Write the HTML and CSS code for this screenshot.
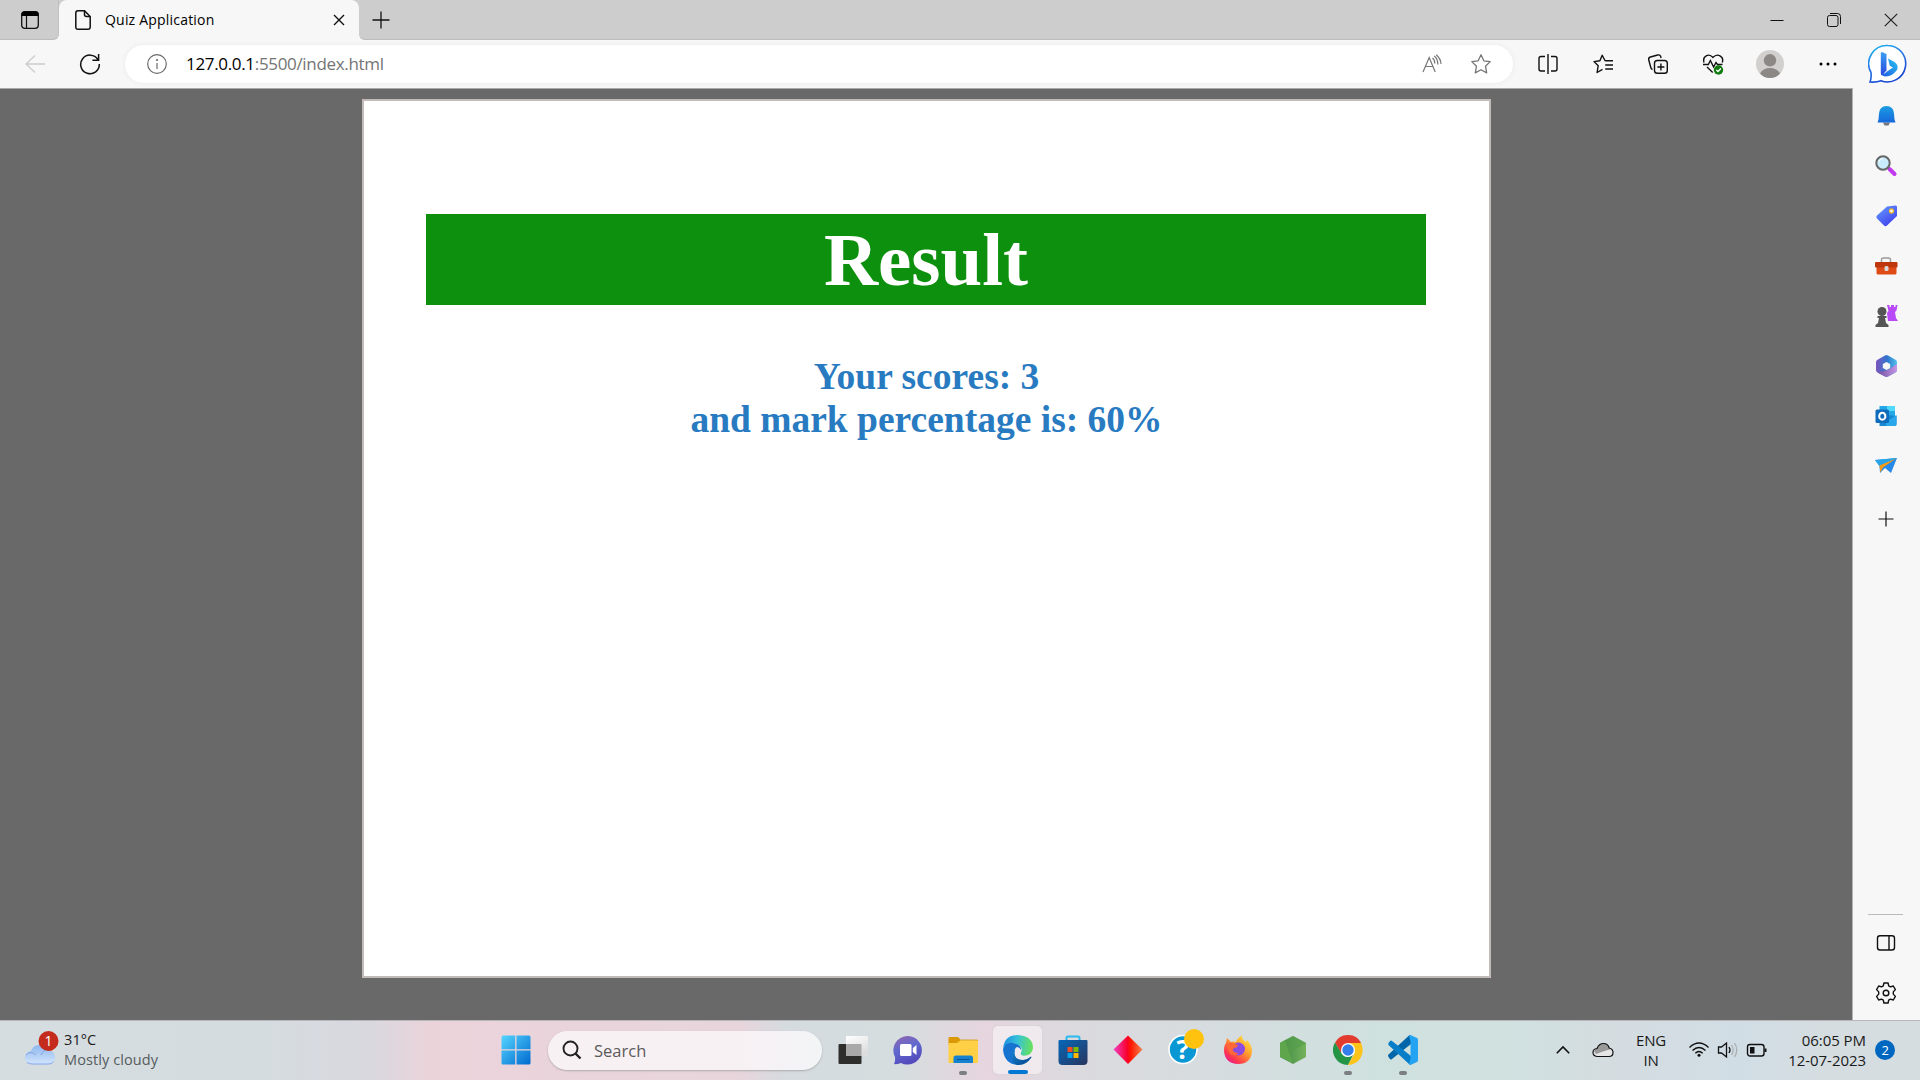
FILE: index.html
```html
<!DOCTYPE html>
<html lang="en">
<head>
<meta charset="utf-8">
<title>Quiz Application</title>
<link rel="stylesheet" href="styles.css">
</head>
<body>
<div class="desktop">
  <header class="tabstrip">
    <div class="strip-left">
      <svg width="20" height="20" viewBox="0 0 20 20"><rect x="1.7" y="1.7" width="16.6" height="16.6" rx="3" fill="none" stroke="#111" stroke-width="1.3"/><path d="M1.5 6V4Q1.5 1.5 4 1.5H16Q18.500 1.500 18.500 4V6Z"/><path d="M6.500 6V18" stroke="#111" stroke-width="1.200"/></svg>
    </div>
    <div class="tab">
      <svg width="18" height="22" viewBox="0 0 18 22" fill="none" stroke="#111" stroke-width="1.5"><path d="M4 1.700H10.500L16.200 7.500V18Q16.200 20.300 14 20.300H4Q1.800 20.300 1.800 18V4Q1.800 1.700 4 1.700Z"/><path d="M10.500 2V5.500Q10.500 7.500 12.500 7.500H16"/></svg>
      <span class="tab-title">Quiz Application</span>
      <svg width="12" height="12" viewBox="0 0 12 12" stroke="#111" stroke-width="1.4"><path d="M1 1L11 11M11 1L1 11"/></svg>
    </div>
    <div class="strip-right">
      <svg width="18" height="18" viewBox="0 0 18 18" stroke="#111" stroke-width="1.300"><path d="M9 .5V17.500M.5 9H17.500"/></svg>
      <div class="window-buttons">
        <span><svg width="14" height="14" viewBox="0 0 14 14" stroke="#111"><path d="M.5 7.500H13.500"/></svg></span>
        <span><svg width="14" height="14" viewBox="0 0 14 14" fill="none" stroke="#111"><rect x=".5" y="2.500" width="10.500" height="11" rx="2"/><path d="M3 .5H10.500Q13.500 .5 13.500 3.500V11"/></svg></span>
        <span><svg width="14" height="14" viewBox="0 0 14 14" stroke="#222" stroke-width="1.200"><path d="M.8 .8L13.200 13.200M13.200 .8L.8 13.200"/></svg></span>
      </div>
    </div>
  </header>

  <nav class="toolbar">
    <span class="cell back"><svg width="20" height="18" viewBox="0 0 20 18" fill="none" stroke="#ccc" stroke-width="1.300"><path d="M20 9H1M10 .5L1 9L10 17.500"/></svg></span>
    <span class="cell"><svg width="22" height="22" viewBox="0 0 22 22" fill="none" stroke="#111" stroke-width="1.500"><path d="M18.900 6.500A9.300 9.300 0 1 0 20.300 11M19.600 1V7.200H13.400"/></svg></span>
    <div class="address">
      <svg width="22" height="22" viewBox="0 0 22 22" fill="none" stroke="#6b6b6b" stroke-width="1.200"><circle cx="11" cy="11" r="9.300"/><path d="M11 10V16"/><circle cx="11" cy="7" r=".5"/></svg>
      <span class="url"><b>127.0.0.1</b>:5500/index.html</span>
      <svg class="read" width="20" height="20" viewBox="0 0 20 20" fill="none" stroke="#767676" stroke-width="1.200"><path d="M1 18L7.200 3.500L13.200 18M3.400 12.500H11"/><path d="M10.500 4Q12.800 5.600 12.800 9.500M12.300 2Q16 5 15.800 10.500M14.200 .7Q18.800 4.500 19 10"/></svg>
      <svg width="22" height="22" viewBox="0 0 22 22" fill="none" stroke="#767676" stroke-width="1.300" stroke-linejoin="round"><path d="M11 1.800L13.800 7.800L20.200 8.600L15.500 13.200L16.700 19.900L11 16.700L5.300 19.900L6.500 13.200L1.800 8.600L8.200 7.800Z"/></svg>
    </div>
    <div class="tools">
      <span class="cell"><svg width="20" height="20" viewBox="0 0 20 20" fill="none" stroke="#111" stroke-width="1.400"><path d="M7 2.500H3Q1 2.500 1 4.500V15Q1 17 3 17H7M13 2.500H17Q19 2.500 19 4.500V15Q19 17 17 17H13M10 0V20"/></svg></span>
      <span class="cell"><svg width="20" height="20" viewBox="0 0 20 20" fill="none" stroke="#111" stroke-width="1.400" stroke-linejoin="round"><path d="M12.200 7L9.200 1.200L6.900 6.800L1 7.600L5.200 11.700L4.100 18.500L9.500 15.400M12.200 6.800H20M12.200 11H20M12.200 15H20"/></svg></span>
      <span class="cell"><svg width="22" height="22" viewBox="0 0 22 22" fill="none" stroke="#111" stroke-width="1.400"><rect x="7.500" y="7.500" width="12.800" height="12.800" rx="2.800"/><path d="M13.900 10.500V17.500M10.400 14H17.400M5.500 16.500Q4.100 16 3.800 14.500L1.700 6.800Q1.300 4.600 3.400 4L10.700 2Q13 1.400 13.600 3.300L14.100 5"/></svg></span>
      <span class="cell"><svg width="22" height="22" viewBox="0 0 22 22" fill="none" stroke="#111" stroke-width="1.400"><path d="M2 9.500C.2 3 6.700-.2 11 4.400C15.200-.2 22.300 3 20.300 9.500M1 11.500H6.300L8.400 7.500L11.600 14L14 9.500L15.500 11.500H20.500M5 14L10.700 19.500"/><circle cx="16.500" cy="17" r="4.700" fill="#107c10" stroke="none"/><path d="M14.300 17L16 18.600L18.900 15.500" stroke="#fff"/></svg></span>
      <span class="cell avatar"><svg width="28" height="28" viewBox="0 0 28 28"><circle cx="14" cy="14" r="14" fill="#d2d0ce"/><circle cx="14" cy="10.300" r="6.200" fill="#8b8886"/><path d="M4 23.500Q7 18 14 18Q21 18 24 23.500Q20 28 14 28Q8 28 4 23.500Z" fill="#8b8886"/></svg></span>
      <span class="cell"><svg width="18" height="4" viewBox="0 0 18 4"><circle cx="2" cy="2" r="1.500"/><circle cx="9" cy="2" r="1.500"/><circle cx="16" cy="2" r="1.500"/></svg></span>
      <span class="cell bing"><svg width="40" height="40" viewBox="0 0 40 40"><defs><linearGradient id="b1" x2=".5" y2="1"><stop stop-color="#18bff0"/><stop offset=".5" stop-color="#2878e8"/><stop offset="1" stop-color="#1746d1"/></linearGradient><linearGradient id="b2" x2="0" y2="1"><stop stop-color="#3aa0f2"/><stop offset="1" stop-color="#2948e0"/></linearGradient><linearGradient id="b3" x1="1" x2="0" y2="1"><stop stop-color="#28c5ef"/><stop offset="1" stop-color="#2157e4"/></linearGradient></defs><path d="M20 1.500A18.200 18.200 0 1 1 13 36.700Q8.500 38.500 2 38Q3.600 34 3 28.500A18.200 18.200 0 0 1 20 1.500Z" fill="#fff" stroke="url(#b1)" stroke-width="1.600"/><path d="M14 8L18.500 10V26.500L14 31.500Q12.800 31 12.800 29V8.500Z" fill="url(#b2)"/><path d="M20 14.500L26.500 18Q31 21 29 26Q24 32.500 18 32.500Q14 32.500 13 29.500Q16 31 19 27.500L25 23.500L21.800 21.800Z" fill="url(#b3)"/></svg></span>
    </div>
  </nav>

  <div class="browser">
    <main class="viewport">
      <section class="card">
        <h1>Result</h1>
        <p>Your scores: 3<br>and mark percentage is: 60%</p>
      </section>
    </main>
    <aside class="sidebar">
      <svg viewBox="0 0 24 24"><defs><linearGradient id="bell" x2="0" y2="1"><stop stop-color="#1b9de2"/><stop offset="1" stop-color="#1668dc"/></linearGradient></defs><path d="M9 18.500H16L14.500 21.500H10.500Z" fill="#73777b"/><path d="M12.500 2Q5.500 2 5 9.500L4.500 15.500L3.500 18.500H21.500L20.500 15.500L20 9.500Q19.500 2 12.500 2Z" fill="url(#bell)"/></svg>
      <svg viewBox="0 0 24 24"><path d="M15.500 15L20.500 20" stroke="#c239ef" stroke-width="4" stroke-linecap="round"/><circle cx="9" cy="9" r="6.700" fill="#c8ecfb" stroke="#666" stroke-width="2"/><path d="M4.500 8Q6 4.500 9 4.500" stroke="#fff" fill="none"/></svg>
      <svg viewBox="0 0 24 24"><defs><linearGradient id="tag" x2=".7" y2="1"><stop stop-color="#65a0ff"/><stop offset="1" stop-color="#403fed"/></linearGradient></defs><path d="M13 2.500L21.500 1.500Q23 1.500 23 3V12L13 21.500Q11.500 23 10 21.500L3 14.500Q1.500 13 3 11.500Z" fill="url(#tag)"/><circle cx="17.500" cy="7" r="2" fill="#fff" stroke="#edb92f" stroke-width="1.300"/></svg>
      <svg viewBox="0 0 24 24"><path d="M7.500 8V6Q7.500 4 9.500 4H14.500Q16.500 4 16.500 6V8" fill="none" stroke="#999" stroke-width="1.400"/><rect x="2.500" y="11" width="20" height="9.500" rx="1.500" fill="#df4b16"/><rect x="1" y="8" width="22.500" height="5.500" rx="1" fill="#bd360c"/><rect x="10.500" y="12" width="4" height="5" rx="1.500" fill="#d9d9d9"/></svg>
      <svg viewBox="0 0 24 24"><path d="M13 1H15.500V3H17V1H20V3H21.500V1H23.500L22.500 6.500L21 8L22 14L24 17H14L13 9L14.500 7Z" fill="#b94af7"/><g fill="#555"><circle cx="8" cy="7.500" r="4.500"/><path d="M3.500 12H12.500V14H11L12 19L14.500 21V23H1.500V21L4 19L5 14H3.500Z"/></g></svg>
      <svg viewBox="0 0 24 24"><defs><linearGradient id="m1"><stop stop-color="#7d54bc"/><stop offset=".55" stop-color="#2f78cf"/><stop offset="1" stop-color="#52c3ec"/></linearGradient><linearGradient id="m2"><stop stop-color="#74509e"/><stop offset="1" stop-color="#c496e8"/></linearGradient></defs><path d="M11 1.400Q12.500.700 14 1.600L21.500 5.700Q23 6.600 23 8.200V16Q23 17.600 21.500 18.500L14 22.500Q12.500 23.300 11 22.500L3.500 18.500Q2 17.600 2 16V8Q2 6.500 3.500 5.700Z" fill="url(#m1)"/><path d="M23 10V16Q23 17.600 21.500 18.500L14 22.500Q12.500 23.300 11 22.500L3.500 18.500L9 17.500L15.500 15Q18.500 13 23 10Z" fill="url(#m2)"/><path d="M12.500 8L16.200 10V14L12.500 16L8.800 14V10Z" fill="#f7f7f7"/></svg>
      <svg viewBox="0 0 24 24"><path d="M5.500 2H21V12H5.500Z" fill="#24a8e8"/><path d="M13 2H21V7H13Z" fill="#50d9ff"/><path d="M5.500 10L22.500 12V20Q22.500 22 21 22H5.500Z" fill="#1687d0"/><path d="M22.500 11L12 18V22H21Q22.500 22 22.500 20Z" fill="#28a8ea"/><rect x="1.500" y="5.500" width="13.500" height="13.500" rx="1.500" fill="#0f6cbd"/><ellipse cx="8.300" cy="12.200" rx="3.100" ry="3.500" fill="none" stroke="#fff" stroke-width="2"/></svg>
      <svg viewBox="0 0 24 24"><path d="M1 6L23 4L17 19L11 14L6 19L5.500 12Z" fill="#2789e8"/><path d="M1 6L23 4L5.500 12Z" fill="#28a5e8"/><path d="M5.500 11.500L22 4.500L9 13.500L6.500 18.500Z" fill="#f39b17"/></svg>
      <svg class="add" viewBox="0 0 24 24" stroke="#111" stroke-width="1.200"><path d="M12 4.500V19.500M4.500 12H19.500"/></svg>
      <div class="sidebar-foot">
        <svg viewBox="0 0 24 24" fill="none" stroke="#111" stroke-width="1.400"><rect x="3.500" y="4.700" width="17" height="14.300" rx="2.500"/><path d="M15 5V19"/></svg>
        <svg viewBox="0 0 24 24" fill="none" stroke="#111" stroke-width="1.400" stroke-linejoin="round"><circle cx="12" cy="12" r="2.800"/><path d="M9.900 2H14.100L14.700 4.800L16.500 5.900L19.300 5L21.400 8.600L19.300 10.900V13.100L21.400 15.400L19.300 19L16.500 18.100L14.700 19.200L14.100 22H9.900L9.300 19.200L7.500 18.100L4.700 19L2.600 15.400L4.700 13.100V10.900L2.600 8.600L4.700 5L7.500 5.900L9.300 4.800Z"/></svg>
      </div>
    </aside>
  </div>

  <footer class="taskbar">
    <div class="weather">
      <svg width="36" height="40" viewBox="0 0 36 40"><defs><linearGradient id="cl" x2="0" y2="1"><stop stop-color="#8eb7ee"/><stop offset="1" stop-color="#d2e4fd"/></linearGradient></defs><circle cx="23" cy="16" r="7" fill="#fa7815"/><path d="M8 33Q2 32.500 2 26.500Q2 21 8 20Q10 14 16 14Q21 14 23 19Q31 18 32 26Q32 33 26 33Z" fill="url(#cl)"/><path d="M3 24Q8 19 13 24M18 24Q20 19 25 19" fill="none" stroke="#82a5e4"/><path d="M4 31.500Q6 33 10 33H26Q29 33 30.500 30.500" fill="none" stroke="#86a6ec"/><circle cx="25.500" cy="10" r="10" fill="#c42b1c"/><text x="25.500" y="15" class="badge-text">1</text></svg>
      <div class="weather-text"><span class="dark">31°C</span><br>Mostly cloudy</div>
    </div>
    <div class="apps">
      <span class="app"><svg viewBox="0 0 30 30"><defs><linearGradient id="w" x2="1" y2="1"><stop stop-color="#55d5ff"/><stop offset="1" stop-color="#0069cf"/></linearGradient></defs><path d="M.5 2Q.5.5 2 .5H14.200V14.200H.5ZM15.500.5H28Q29.500.5 29.500 2V14.200H15.500ZM.5 15.500H14.200V29.500H2Q.5 29.500.5 28ZM15.500 15.500H29.500V28Q29.500 29.500 28 29.500H15.500Z" fill="url(#w)"/></svg></span>
      <div class="search"><svg width="20" height="20" viewBox="0 0 20 20" fill="none" stroke="#222"><circle cx="8.500" cy="8.500" r="7" stroke-width="1.900"/><path d="M13.500 13.500L18.500 18.500" stroke-width="2.400"/></svg><span>Search</span></div>
      <span class="app"><svg viewBox="0 0 30 30"><defs><linearGradient id="tv" x2=".5" y2="1"><stop stop-color="#fff"/><stop offset="1" stop-color="#ddd"/></linearGradient></defs><rect x=".5" y="9" width="23" height="20" rx="1" fill="#2e2e2d"/><rect x="8" y="1" width="22" height="20" rx="1" fill="url(#tv)"/><path d="M8 9H23.500V21H8Z" fill="#a9a9a9"/></svg></span>
      <span class="app"><svg viewBox="0 0 30 30"><defs><linearGradient id="ch" x1="0" y1="0" x2=".4" y2="1"><stop stop-color="#9567ae"/><stop offset=".5" stop-color="#6069ce"/><stop offset="1" stop-color="#544bbd"/></linearGradient></defs><path d="M15 1A14.300 14.300 0 1 1 8 28Q5 29.500 1 29Q2.500 26 2 22A14.300 14.300 0 0 1 15 1Z" fill="url(#ch)"/><rect x="7" y="9" width="11.500" height="12" rx="1.500" fill="#fff"/><path d="M19.800 13L23.500 10V20L19.800 17Z" fill="#fff"/></svg></span>
      <span class="app open"><svg viewBox="0 0 30 30"><path d="M.5 3Q.5 2 1.500 2H10L13 5V10H.5Z" fill="#dc9907"/><path d="M.5 8H9L13 5H29Q30 5 30 6V27Q30 28 29 28H.5Z" fill="#ffcf45"/><path d="M13 5H29Q30 5 30 6" stroke="#dba22a" fill="none"/><path d="M5.500 28V23Q5.500 20.500 8 20.500H22.500Q25 20.500 25 23V28Z" fill="#1681cf"/><path d="M9 24.500H21.500" stroke="#07579c"/></svg></span>
      <span class="app active"><svg viewBox="0 0 30 30"><defs><linearGradient id="e1" x1="0" y1=".4" x2="1" y2=".5"><stop stop-color="#1b8de0"/><stop offset=".45" stop-color="#36c2d9"/><stop offset="1" stop-color="#68e258"/></linearGradient><linearGradient id="e2" x2=".8" y2="1"><stop stop-color="#1689d6"/><stop offset="1" stop-color="#084b91"/></linearGradient></defs><path d="M.2 13Q1.500 0 15 0Q29.800 1 30 13Q29 21 20.500 20.800Q16.500 20 18 17.500Q20.500 12 14.500 10Q7 5 .2 13Z" fill="url(#e1)"/><path d="M0 14Q3 6.500 10 8Q18 9.500 18.300 15Q14 9.500 12 14Q9 23 18 26Q14 30 15 30Q1 29 0 14Z" fill="#1673cf"/><path d="M12 14Q9.500 25 20 25Q24 25 28 21.500Q29 21.500 28 23Q23 30.500 14 30Q7 26 9.500 18Q10.500 14.500 14.500 12Z" fill="url(#e2)"/></svg></span>
      <span class="app"><svg viewBox="0 0 30 30"><defs><linearGradient id="st" x2="1" y2="1"><stop stop-color="#0767b8"/><stop offset="1" stop-color="#28355e"/></linearGradient></defs><path d="M8.500 7V3Q8.500 1.500 10 1.500H20Q21.500 1.500 21.500 3V7" fill="none" stroke="#29b9ef" stroke-width="2"/><path d="M.5 6Q.5 5 1.500 5H28.500Q29.500 5 29.500 6V26Q29.500 30 25.500 30H4.500Q.5 30 .5 26Z" fill="url(#st)"/><path d="M9.500 12H14.500V17H9.500Z" fill="#f25022"/><path d="M15.500 12H20.500V17H15.500Z" fill="#7fba00"/><path d="M9.500 18H14.500V23H9.500Z" fill="#00a4ef"/><path d="M15.500 18H20.500V23H15.500Z" fill="#ffb900"/></svg></span>
      <span class="app"><svg viewBox="0 0 30 30"><defs><linearGradient id="rd"><stop stop-color="#f03fc6"/><stop offset=".48" stop-color="#f90029"/><stop offset=".6" stop-color="#ff1900"/><stop offset="1" stop-color="#f28550"/></linearGradient></defs><path d="M15 .5L29.500 14.500L15 29L.5 14.500Z" fill="url(#rd)"/></svg></span>
      <span class="app"><svg class="help" viewBox="0 0 38 36"><circle cx="15" cy="20.500" r="14" fill="#0a98d5" stroke="#fff" stroke-width="1.600"/><text x="15" y="29.500" class="question">?</text><circle cx="26" cy="10" r="10" fill="#ffc20e"/></svg></span>
      <span class="app"><svg viewBox="0 0 30 30"><defs><linearGradient id="fx" x1="1" x2=".2" y2="1"><stop stop-color="#fff44f"/><stop offset=".45" stop-color="#ffa12c"/><stop offset=".8" stop-color="#ff384d"/><stop offset="1" stop-color="#e41995"/></linearGradient></defs><path d="M4 3L8 7Q11 6 13 7Q14 3 19 .5Q18.500 4 23 7L24 5Q29 10 29 16Q28 29 15 29Q2 28.500 1 16Q1 10 3 8Z" fill="url(#fx)"/><circle cx="15.500" cy="14" r="6.500" fill="#8b4be0"/><path d="M4 9Q8 7 11 8.500L15 10Q14 13 11 13L9.500 15Q12 19 16 18Q12 22 7 19Q4 14 4 9Z" fill="#ff6638"/></svg></span>
      <span class="app"><svg viewBox="0 0 30 30"><defs><linearGradient id="nd"><stop stop-color="#3d8744"/><stop offset="1" stop-color="#75b35c"/></linearGradient></defs><path d="M15 1L28 8V22L15 29L2 22V8Z" fill="url(#nd)"/><path d="M2 8L7 5L15 28L2 22Z" fill="#5fa54c"/><path d="M7 5L15 1L28 8L11 18Z" fill="#559e4c" opacity=".7"/></svg></span>
      <span class="app open"><svg viewBox="0 0 30 30"><path d="M2 7.500A15 15 0 0 1 28 7.500L22 12H10L8 18Z" fill="#e33b2e"/><path d="M2 7.500L8.500 18.500Q11 22 15 22L20 20L15 30A15 15 0 0 1 2 7.500Z" fill="#249447"/><path d="M15 8H28A15 15 0 0 1 15 30L21.500 18.500Q23.500 12 15 8Z" fill="#fcc31b"/><circle cx="15" cy="15" r="7" fill="#fff"/><circle cx="15" cy="15" r="5.700" fill="#347eec"/></svg></span>
      <span class="app open"><svg viewBox="0 0 30 30"><path d="M0 20L21 .5Q22 0 23 1V9L4 24Q3 25 2 24L.5 22Q0 21 0 20Z" fill="#0065a9"/><path d="M.5 8L2 6Q3 5 4 6L23 21V29Q22 30 21 29L.5 10Q0 9 .5 8Z" fill="#087dc8"/><path d="M22.500 0L29 3Q30 3.500 30 5V25Q30 26.500 29 27L22.500 30Q22 30 21 29L22.500 24V6L21 1Z" fill="#24a3f2"/></svg></span>
    </div>
    <div class="tray">
      <svg width="14" height="14" viewBox="0 0 14 14" fill="none" stroke="#111" stroke-width="1.600"><path d="M.8 10.300L7 4L13.200 10.300"/></svg>
      <svg width="22" height="16" viewBox="0 0 22 16"><path d="M5 14.500Q1 14 1 10.500Q1 7 5 6.500Q7 1.500 11.500 1.500Q16 1.500 17.200 6Q21 7 21 10.500Q21 14.500 17 14.500Z" fill="#e5e5e5"/><path d="M5 6.500Q7 1.500 11.500 1.500Q16 1.500 17.200 6L19 7L11 9.500L4 12L2 9Z" fill="#999"/><path d="M5 14.500Q1 14 1 10.500Q1 7 5 6.500Q7 1.500 11.500 1.500Q16 1.500 17.200 6Q21 7 21 10.500Q21 14.500 17 14.500Z" fill="none" stroke="#111" stroke-width="1.200"/></svg>
      <div class="language">ENG<br>IN</div>
      <svg width="22" height="18" viewBox="0 0 22 18" fill="none" stroke="#111" stroke-width="1.400"><path d="M1.500 6.500Q11-2.300 20.500 6.500M4.500 9.500Q11 3.300 17.500 9.500M7.300 12.300Q11 8.800 14.700 12.300"/><circle cx="11" cy="14.300" r="1.500" fill="#111" stroke="none"/></svg>
      <svg width="22" height="18" viewBox="0 0 22 18" fill="none" stroke="#111" stroke-width="1.300"><path d="M1.500 6H4.500L9.500 2V16L4.500 12H1.500ZM12 6Q14 9 12 12"/><path d="M14.500 4Q18 9 14.500 14M17.500 2Q22 9 17.500 16" stroke="#aab0b2"/></svg>
      <svg width="22" height="16" viewBox="0 0 22 16" fill="none" stroke="#111" stroke-width="1.400"><rect x="1.500" y="2.500" width="16.500" height="11.500" rx="2.500"/><path d="M4 5H8.500V11.500H4ZM18.500 6.500H20.500V10H18.500Z" fill="#111" stroke="none"/></svg>
      <div class="clock">06:05 PM<br>12-07-2023</div>
      <span class="count">2</span>
    </div>
  </footer>
</div>
</body>
</html>
```
FILE: styles.css
```css
* { box-sizing: border-box; }
body { margin: 0; font-family: "Open Sans", "Noto Sans", sans-serif; }
svg { display: block; flex: none; }

.desktop { display: flex; flex-direction: column; width: 1920px; height: 1080px; overflow: hidden; background: #f7f7f7; }

.tabstrip { display: flex; height: 40px; flex: none; }
.strip-left, .strip-right { display: flex; align-items: center; background: #cdcdcd; border-bottom: 1px solid #bcbcbc; }
.strip-left { width: 59px; padding-left: 20px; border-right: 1px solid #c1c1c1; border-bottom-right-radius: 6px; }
.strip-right { flex: 1; justify-content: space-between; padding-left: 13px; border-bottom-left-radius: 6px; }
.tab { display: flex; align-items: center; width: 300px; padding: 0 14px 0 15px; background: #f7f7f7; box-shadow: 0 -6px 0 #cdcdcd; border-radius: 8px 8px 0 0; }
.tab-title { flex: 1; margin-left: 13px; padding-bottom: 2px; font-size: 14px; letter-spacing: 0.2px; }
.window-buttons { display: flex; padding-right: 1px; }
.window-buttons span { display: flex; justify-content: center; width: 57px; }

.toolbar { display: flex; align-items: center; height: 48px; flex: none; }
.cell { display: flex; justify-content: center; align-items: center; width: 55px; padding-bottom: 1px; }
.back { width: 69px; margin-right: -7px; }
.address { display: flex; align-items: center; width: 1388px; height: 38px; margin-left: 8px; padding: 0 21px 1px; background: #fff; border-radius: 19px; box-shadow: 0 0 5px #e9e9e9; }
.url { flex: 1; margin-left: 18px; padding-bottom: 1px; font-size: 17px; letter-spacing: -0.33px; color: #747474; }
.url b { font-weight: 400; color: #000; }
.read { margin-right: 28px; }
.tools { display: flex; align-items: center; margin-left: 7px; }
.avatar { width: 60px; }
.bing { width: 65px; }

.browser { display: flex; height: 932px; flex: none; }
.viewport { width: 1853px; padding: 10px 0 0 362px; background: #696969; border-top: 1px solid #aaa; border-right: 1px solid #b5b5b5; }
.card { width: 1129px; height: 879px; padding: 113px 62px 0; background: #fff; border: 2px solid #c3bbb9; text-align: center; font-family: "Liberation Serif", serif; font-weight: 700; }
.card h1 { width: 1000px; height: 91px; margin: 0; background: #0d900d; color: #fff; font-size: 75px; line-height: 91px; }
.card p { margin: 50px 0 0; color: #287bc1; font-size: 37.5px; line-height: 43px; }

.sidebar { display: flex; flex-direction: column; align-items: center; width: 67px; padding: 16px 2px 0 0; }
.sidebar > svg { width: 24px; height: 24px; margin-bottom: 26px; }
.sidebar .add { margin-top: 3px; }
.sidebar-foot { display: flex; flex-direction: column; align-items: center; gap: 26px; width: 35px; margin: auto 0 15px; padding-top: 16px; border-top: 1px solid #bbb; }
.sidebar-foot svg { width: 24px; height: 24px; }

.taskbar { display: flex; align-items: center; height: 60px; flex: none; border-top: 1px solid #b7b7b9; background: linear-gradient(90deg, #d5dde0 0, #d5dce0 260px, #d9d8df 370px, #ebd3da 430px, #e8d5dc 740px, #d5dbdf 785px, #d5dddf 900px, #e6d5de 985px, #dbdade 1070px, #d5dcdf 1230px, #cfe1df 1370px, #d0e1e0 1500px, #d4dce0 1610px, #d1dde5 1740px, #d5dde0 1830px); }
.weather { display: flex; align-items: center; width: 488px; padding-left: 23px; }
.weather-text { margin-left: 5px; padding-bottom: 1px; font-size: 14.5px; line-height: 20px; letter-spacing: 0.1px; color: #555b5e; }
.dark { color: #1a1a1a; }
.badge-text { font-size: 14px; fill: #fff; text-anchor: middle; }
.apps { display: flex; align-items: center; width: 1067px; padding-bottom: 1px; }
.app { display: flex; flex-direction: column; align-items: center; justify-content: center; position: relative; width: 55px; height: 48px; }
.app svg { width: 30px; height: 30px; }
.app .help { width: 38px; height: 36px; margin: -6px 0 0 8px; }
.question { font-size: 27px; font-weight: 700; fill: #fff; text-anchor: middle; }
.app.open::after, .app.active::after { content: ""; position: absolute; bottom: -1px; width: 8px; height: 4px; border-radius: 2px; background: #7b7f82; }
.app.active { width: 49px; margin: 0 3px; background: #f0eaee; border-radius: 5px; box-shadow: 0 0 2px #ccc; }
.app.active::after { bottom: 0; width: 20px; background: #0078d4; }
.search { display: flex; align-items: center; width: 274px; height: 39px; margin: 0 3px 0 5px; padding-left: 14px; border-radius: 20px; background: linear-gradient(90deg, #f8f1f4 70%, #f2f4f6); box-shadow: 0 1px 2px #aaa; color: #5a5a5a; font-size: 16.5px; }
.search span { margin-left: 12px; }
.tray { display: flex; align-items: center; padding-bottom: 2px; font-size: 15px; line-height: 20px; color: #1a1a1a; letter-spacing: -0.2px; }
.tray svg { margin-right: 7px; }
.tray svg:first-child { margin: 0 0 0 1px; }
.tray svg:nth-child(2) { margin: 0 0 0 22px; }
.language { width: 42px; margin: 0 16px; text-align: center; }
.clock { width: 91px; text-align: right; white-space: nowrap; letter-spacing: -0.05px; }
.count { width: 20px; height: 20px; margin-left: 9px; border-radius: 10px; background: #0067c0; color: #fff; text-align: center; font-size: 13px; }
```
